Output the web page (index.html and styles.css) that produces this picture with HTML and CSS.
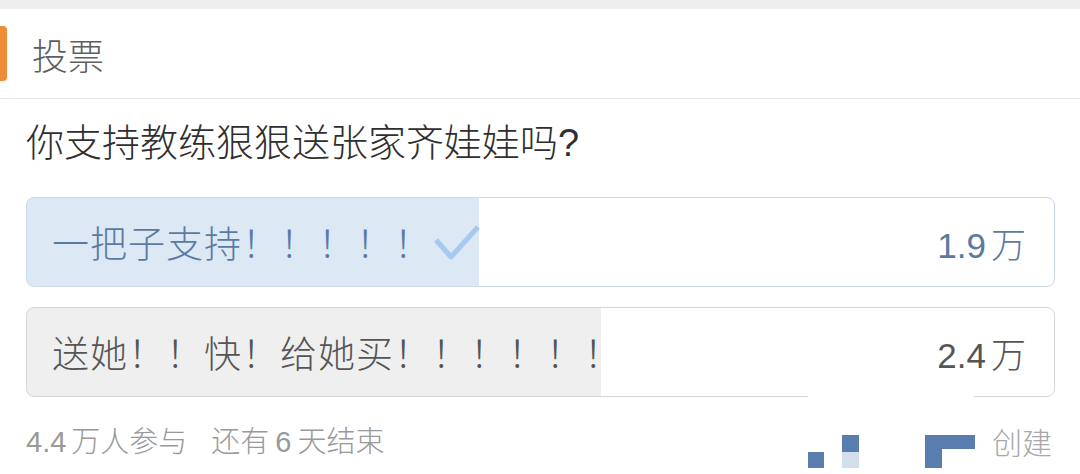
FILE: index.html
```html
<!DOCTYPE html>
<html lang="zh-CN">
<head>
  <meta charset="UTF-8">
  <meta name="viewport" content="width=device-width, initial-scale=1.0">
  <title>投票</title>
  <link rel="stylesheet" href="styles.css">
</head>
<body>
  <div id="page">
    <div class="topbar"></div>

    <div class="header">
      <div class="marker"></div>
      <div class="title">投票</div>
    </div>

    <div class="vote">
      <div class="question">你支持教练狠狠送张家齐娃娃吗?</div>

      <div class="options">
        <div class="option chosen" style="--pct: 44%">
          <span class="label">一把子支持！！！！！</span>
          <svg class="check" width="46" height="40" viewBox="0 0 46 40">
            <path d="M2 16 L17 33 L44 3" fill="none" stroke="#a6c9ef" stroke-width="5" stroke-linejoin="round"/>
          </svg>
          <span class="count">1.9<span class="unit">万</span></span>
        </div>
        <div class="option" style="--pct: 55.9%">
          <span class="label">送她！！快！给她买！！！！！！</span>
          <span class="count">2.4<span class="unit">万</span></span>
        </div>
      </div>

      <div class="footer">
        <span class="stats">4.4<span class="unit">万人参与</span><span class="sep"></span>还有<span class="num">6</span>天结束</span>
        <span class="create">创建</span>
      </div>
    </div>

    <div class="watermark">
      <div class="wm-block a"></div>
      <div class="wm-block b"></div>
      <div class="wm-block c"></div>
      <div class="wm-block d"></div>
      <div class="wm-block e"></div>
    </div>
  </div>
</body>
</html>
```

FILE: styles.css
```css
* {
  box-sizing: border-box;
}

:root {
  --orange: #ef8c37;
  --line: #e6e6e6;
  --text: #333333;
  --muted: #999999;
  --blue-fill: #dde8f5;
  --blue-border: #ccd9e6;
  --blue-text: #5b7aa2;
  --gray-fill: #efefef;
  --gray-border: #d6d6d6;
  --gray-text: #555555;
}

html, body {
  margin: 0;
  background: #ffffff;
  font-family: "Liberation Sans", "Noto Sans CJK SC", sans-serif;
  color: var(--text);
}

#page {
  position: relative;
  width: 1080px;
  height: 474px;
  overflow: hidden;
}

.topbar {
  height: 9px;
  background: #eeeeee;
}

.header {
  height: 90px;
  display: flex;
  align-items: center;
  border-bottom: 1px solid var(--line);
}

.marker {
  width: 7px;
  height: 55px;
  background: var(--orange);
  border-radius: 0 4px 4px 0;
}

.title {
  margin-left: 25px;
  font-family: "Noto Sans CJK SC", sans-serif;
  font-weight: 300;
  font-size: 36px;
  color: #5f5f5f;
  line-height: 40px;
}

.vote {
  padding: 0 25px 0 26px;
}

.question {
  padding-top: 19px;
  font-size: 38px;
  font-weight: 300;
  line-height: 50px;
  color: #2f2f2f;
}

.options {
  margin-top: 29px;
  display: flex;
  flex-direction: column;
  gap: 20px;
}

.option {
  height: 90px;
  display: flex;
  align-items: center;
  padding: 0 28px 0 25px;
  border: 1px solid var(--gray-border);
  border-radius: 8px;
  background: linear-gradient(to right, var(--gray-fill) var(--pct), #ffffff var(--pct));
  color: var(--gray-text);
  font-size: 35px;
}

.option.chosen {
  border-color: var(--blue-border);
  background: linear-gradient(to right, var(--blue-fill) var(--pct), #ffffff var(--pct));
  color: var(--blue-text);
}

.label {
  font-family: "Noto Sans CJK SC", sans-serif;
  font-weight: 300;
  font-size: 37px;
  letter-spacing: 1px;
}

.check {
  margin-left: 2px;
  margin-top: 4px;
}

.count {
  margin-left: auto;
  font-size: 35px;
}

.unit {
  margin-left: 5px;
  font-family: "Noto Sans CJK SC", sans-serif;
  font-weight: 300;
}

.footer {
  margin-top: 22px;
  display: flex;
  align-items: center;
  justify-content: space-between;
  line-height: 40px;
  font-size: 29px;
  color: var(--muted);
  font-family: "Noto Sans CJK SC", sans-serif;
  font-weight: 300;
}

.footer .stats {
  font-family: "Liberation Sans", "Noto Sans CJK SC", sans-serif;
}

.footer .sep {
  display: inline-block;
  width: 24px;
}

.footer .num {
  margin: 0 6px;
}

.create {
  margin-right: 3px;
  font-size: 30px;
  color: #a8a8a8;
}

/* leftover of an erased watermark */
.watermark {
  position: absolute;
  left: 808px;
  top: 392px;
  width: 166px;
  height: 82px;
  background: #ffffff;
}

.wm-block {
  position: absolute;
  background: #5a7db0;
}

.wm-block.a {
  left: 0;
  top: 60px;
  width: 16px;
  height: 16px;
}

.wm-block.b {
  left: 34px;
  top: 43px;
  width: 17px;
  height: 17px;
}

.wm-block.c {
  left: 34px;
  top: 60px;
  width: 17px;
  height: 16px;
  background: #d3deec;
}

.wm-block.d {
  left: 117px;
  top: 43px;
  width: 50px;
  height: 14px;
}

.wm-block.e {
  left: 117px;
  top: 57px;
  width: 17px;
  height: 19px;
}
```
